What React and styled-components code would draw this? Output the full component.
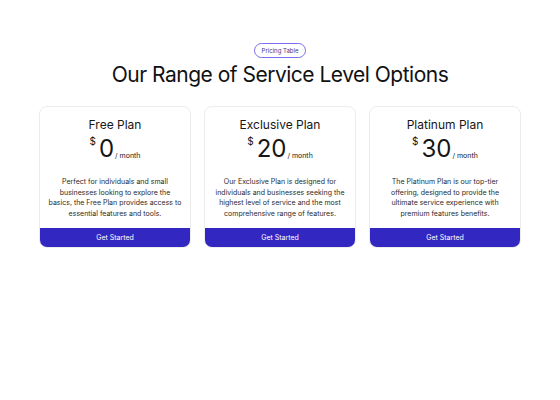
import React from "react";
import styled, { createGlobalStyle } from "styled-components";

const plans = [
    {
        name: "Free Plan",
        price: "0",
        text: "Perfect for individuals and small businesses looking to explore the basics, the Free Plan provides access to essential features and tools.",
    },
    {
        name: "Exclusive Plan",
        price: "20",
        text: "Our Exclusive Plan is designed for individuals and businesses seeking the highest level of service and the most comprehensive range of features.",
    },
    {
        name: "Platinum Plan",
        price: "30",
        text: "The Platinum Plan is our top-tier offering, designed to provide the ultimate service experience with premium features benefits.",
    },
];

function App() {
    return (
        <>
            <GlobalStyle />
            <Page>
                <Badge>Pricing Table</Badge>
                <Title>Our Range of Service Level Options</Title>
                <Grid>
                    {plans.map((p) => (
                        <Card key={p.name}>
                            <CardBody>
                                <PlanName>{p.name}</PlanName>
                                <Price>
                                    <Currency>$</Currency>
                                    <Amount>{p.price}</Amount>
                                    <Period>/ month</Period>
                                </Price>
                                <Description>{p.text}</Description>
                            </CardBody>
                            <Button>Get Started</Button>
                        </Card>
                    ))}
                </Grid>
            </Page>
        </>
    );
}

export default App;

const GlobalStyle = createGlobalStyle`
    body {
        margin: 0;
        background: #fff;
        font-family: Inter, "Noto Sans", sans-serif;
        color: #161616;
    }
`;

const Page = styled.div`
    width: 560px;
    height: 400px;
    box-sizing: border-box;
    padding: 43px 39px 0;
    display: flex;
    flex-direction: column;
    align-items: center;
`;

const Badge = styled.div`
    height: 13px;
    padding: 0 7px;
    border: 1px solid #7a6df0;
    border-radius: 8px;
    font-size: 6px;
    line-height: 13px;
    color: #3d3490;
    box-sizing: content-box;
`;

const Title = styled.h1`
    margin: 2px 0 0;
    font-size: 21px;
    font-weight: 400;
    line-height: 30px;
    letter-spacing: -0.5px;
    color: #111;
`;

const Grid = styled.div`
    margin-top: 16px;
    width: 100%;
    display: grid;
    grid-template-columns: repeat(3, 1fr);
    gap: 13px;
`;

const Card = styled.div`
    height: 142px;
    border: 1px solid #ececec;
    border-radius: 8px;
    overflow: hidden;
    display: flex;
    flex-direction: column;
    box-sizing: border-box;
`;

const CardBody = styled.div`
    flex: 1;
    padding: 10px 8px 0;
    display: flex;
    flex-direction: column;
    align-items: center;
    text-align: center;
`;

const PlanName = styled.div`
    font-size: 12px;
    line-height: 16px;
    color: #161616;
`;

const Price = styled.div`
    margin-top: 2px;
    display: flex;
    align-items: flex-end;
    height: 26px;
`;

const Currency = styled.span`
    align-self: flex-start;
    font-size: 10px;
    line-height: 12px;
    margin-right: 3px;
`;

const Amount = styled.span`
    font-size: 24px;
    line-height: 24px;
`;

const Period = styled.span`
    font-size: 7px;
    line-height: 9px;
    margin-left: 1px;
    margin-bottom: 1px;
`;

const Description = styled.p`
    margin: 16px 0 0;
    font-size: 7px;
    line-height: 10.5px;
    color: #2a2a2a;
`;

const Button = styled.button`
    height: 19px;
    border: none;
    background: #3327c1;
    color: #fff;
    font-family: inherit;
    font-size: 7px;
    padding: 0;
    cursor: pointer;
`;
